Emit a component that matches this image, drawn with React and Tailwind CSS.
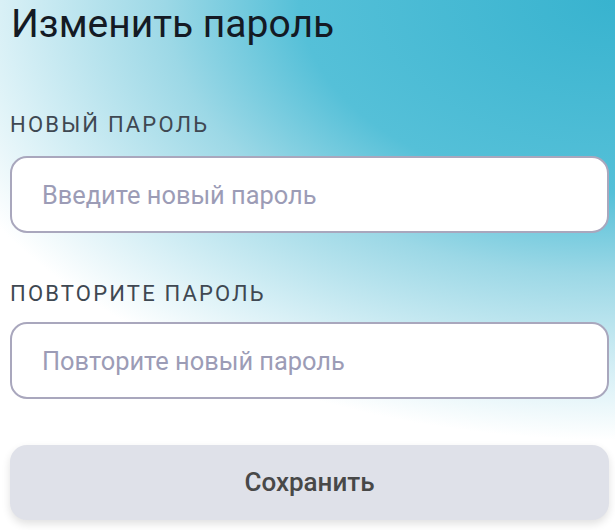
import React from "react";

export default function App() {
  return (
    <div
      className="h-[530px] w-full overflow-hidden bg-[radial-gradient(ellipse_900px_550px_at_top_right,#38b3cf_0%,#55c0d8_35%,#9cd8e6_50%,#d8f0f6_68%,#ffffff_80%)] pl-[10px] pr-[6px]"
      style={{ fontFamily: "Roboto, 'Noto Sans', sans-serif" }}
    >
      <h1 className="pt-[1px] pl-[1px] text-[39px] leading-[46px] font-normal text-[#141a24]">
        Изменить пароль
      </h1>
      <form className="flex flex-col" onSubmit={(e) => e.preventDefault()}>
        <label className="mt-[65px] block text-[22px] leading-[26px] tracking-[0.1em] text-[#3f4852] uppercase">
          Новый пароль
        </label>
        <input
          type="password"
          placeholder="Введите новый пароль"
          className="mt-[18px] h-[77px] w-full rounded-[17px] border-2 border-[#a9a7bd] bg-white px-[30px] text-[25.4px] text-[#333] outline-none placeholder:text-[#9c9cb6]"
        />
        <label className="mt-[48px] block text-[22px] leading-[26px] tracking-[0.1em] text-[#3f4852] uppercase">
          Повторите пароль
        </label>
        <input
          type="password"
          placeholder="Повторите новый пароль"
          className="mt-[15px] h-[77px] w-full rounded-[17px] border-2 border-[#a9a7bd] bg-white px-[30px] text-[25.4px] text-[#333] outline-none placeholder:text-[#9c9cb6]"
        />
        <button
          type="submit"
          className="mt-[46px] h-[75px] w-full rounded-[17px] bg-[#dfe1e9] text-[26px] font-medium text-[#484848] shadow-[0_4px_8px_rgba(0,0,0,0.12)]"
        >
          Сохранить
        </button>
      </form>
    </div>
  );
}
